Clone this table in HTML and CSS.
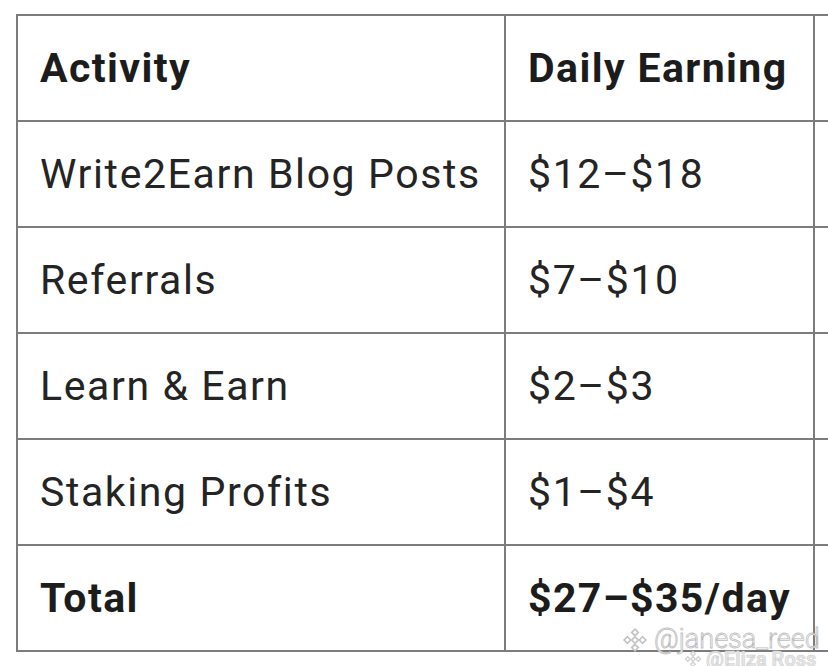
FILE: index.html
```html
<!DOCTYPE html>
<html>
<head>
<meta charset="utf-8">
<link rel="stylesheet" href="styles.css">
</head>
<body>
<div class="page">
  <div class="grid">
    <div class="cell head">Activity</div>
    <div class="cell head">Daily Earning</div>
    <div class="cell"></div>

    <div class="cell">Write2Earn Blog Posts</div>
    <div class="cell">$12–$18</div>
    <div class="cell"></div>

    <div class="cell">Referrals</div>
    <div class="cell">$7–$10</div>
    <div class="cell"></div>

    <div class="cell">Learn &amp; Earn</div>
    <div class="cell">$2–$3</div>
    <div class="cell"></div>

    <div class="cell">Staking Profits</div>
    <div class="cell">$1–$4</div>
    <div class="cell"></div>

    <div class="cell head">Total</div>
    <div class="cell head">$27–$35/day</div>
    <div class="cell"></div>
  </div>
  <div class="wm wm-sub">
    <svg class="wm-logo" viewBox="0 0 24 24" width="18" height="18">
      <g fill="none" stroke="#d2d2d2" stroke-width="1.8">
        <path d="M12 2 L15 5 L12 8 L9 5 Z"/>
        <path d="M5 9 L8 12 L5 15 L2 12 Z"/>
        <path d="M19 9 L22 12 L19 15 L16 12 Z"/>
        <path d="M12 16 L15 19 L12 22 L9 19 Z"/>
        <path d="M12 9 L15 12 L12 15 L9 12 Z"/>
      </g>
    </svg>
    <span>@Eliza Ross</span>
  </div>
  <div class="wm wm-main">
    <svg class="wm-logo" viewBox="0 0 24 24" width="26" height="26">
      <g fill="#ffffff" stroke="#c4c4c4" stroke-width="1.6">
        <path d="M12 2 L15 5 L12 8 L9 5 Z"/>
        <path d="M5 9 L8 12 L5 15 L2 12 Z"/>
        <path d="M19 9 L22 12 L19 15 L16 12 Z"/>
        <path d="M12 16 L15 19 L12 22 L9 19 Z"/>
        <path d="M12 9 L15 12 L12 15 L9 12 Z"/>
      </g>
    </svg>
    <span>@janesa_reed</span>
  </div>
</div>
</body>
</html>
```
FILE: styles.css
```css
html, body {
  margin: 0;
  padding: 0;
  background: #ffffff;
  overflow: hidden;
}
.page {
  position: relative;
  width: 828px;
  height: 666px;
  padding: 14px 0 0 16px;
  box-sizing: border-box;
  overflow: hidden;
}
.grid {
  display: grid;
  grid-template-columns: 486px 307px 200px;
  grid-auto-rows: 104px;
  gap: 2px;
  padding: 2px;
  background: #7c7c7c;
  width: max-content;
}
.cell {
  background: #ffffff;
  display: flex;
  align-items: center;
  padding-left: 22px;
  font-family: Roboto, "Liberation Sans", sans-serif;
  font-size: 41px;
  letter-spacing: 1.6px;
  color: #242424;
  white-space: nowrap;
}
.head {
  font-weight: 700;
  color: #1c1c1c;
  letter-spacing: 1.4px;
}
.wm {
  position: absolute;
  display: flex;
  align-items: center;
  gap: 6px;
  font-family: Roboto, "Liberation Sans", sans-serif;
  white-space: nowrap;
  line-height: 1;
}
.wm-main {
  left: 622px;
  top: 626px;
  font-size: 27px;
  font-weight: 300;
  color: #ffffff;
  -webkit-text-stroke: 0.8px #bcbcbc;
}
.wm-sub {
  left: 684px;
  top: 649px;
  gap: 4px;
  font-size: 20px;
  font-weight: 700;
  color: #e4e4e4;
  -webkit-text-stroke: 0.5px #cfcfcf;
}
```
